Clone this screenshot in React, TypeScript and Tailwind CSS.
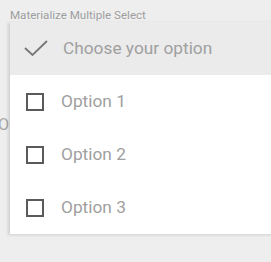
export default function App() {
  const options = ["Option 1", "Option 2", "Option 3"];

  return (
    <div
      className="relative h-[262px] w-[271px] overflow-hidden bg-[#eeeeee]"
      style={{ fontFamily: "Roboto, 'Liberation Sans', sans-serif" }}
    >
      {/* page content underneath */}
      <div className="pl-[10px] pt-[7px]">
        <label className="block text-[11.6px] leading-[16px] text-[#9e9e9e]">
          Materialize Multiple Select
        </label>
        <div className="mt-[92px] -ml-[12px] text-[16px] leading-[20px] text-[#a8a8a8]">
          Or
        </div>
      </div>

      {/* open dropdown menu */}
      <ul className="absolute left-[10px] top-[22px] w-[300px] bg-white shadow-[-2px_1px_3px_rgba(0,0,0,0.13)]">
        <li className="flex h-[53px] items-center bg-[#ebebeb] pl-[14px]">
          <svg width="24" height="18" viewBox="0 0 24 18" className="mr-[15px]">
            <path d="M1 8 L8.5 15 L23 1" fill="none" stroke="#777777" strokeWidth="1.8" />
          </svg>
          <span className="text-[17.3px] text-[#a0a0a0]">Choose your option</span>
        </li>
        {options.map((o) => (
          <li key={o} className="flex h-[53px] items-center pl-[16px]">
            <span className="mr-[17px] box-border h-[18px] w-[18px] border-2 border-[#5a5a5a]" />
            <span className="text-[17.3px] text-[#a0a0a0]">{o}</span>
          </li>
        ))}
      </ul>
    </div>
  );
}
